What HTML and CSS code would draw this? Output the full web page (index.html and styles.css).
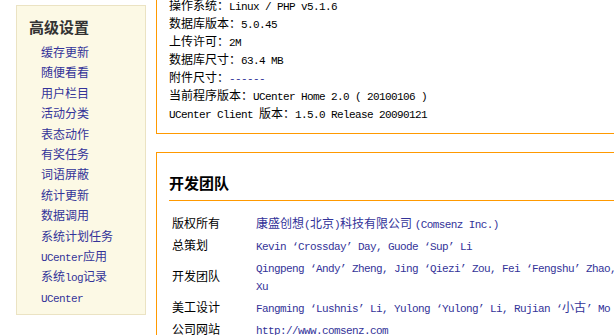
FILE: index.html
```html
<!DOCTYPE html>
<html lang="zh-CN">
<head>
    <meta charset="UTF-8">
    <title>UCenter Home 管理平台</title>
    <link rel="stylesheet" href="styles.css">
</head>
<body>
    <div class="page">
        <div class="side">
            <h2>高级设置</h2>
            <ul class="menu">
                <li><a href="#">缓存更新</a></li>
                <li><a href="#">随便看看</a></li>
                <li><a href="#">用户栏目</a></li>
                <li><a href="#">活动分类</a></li>
                <li><a href="#">表态动作</a></li>
                <li><a href="#">有奖任务</a></li>
                <li><a href="#">词语屏蔽</a></li>
                <li><a href="#">统计更新</a></li>
                <li><a href="#">数据调用</a></li>
                <li><a href="#">系统计划任务</a></li>
                <li><a href="#"><span class="en">UCenter</span>应用</a></li>
                <li><a href="#">系统<span class="en">log</span>记录</a></li>
                <li><a href="#"><span class="en">UCenter</span></a></li>
            </ul>
        </div>

        <div class="main">
            <div class="box info">
                <ul class="sysinfo">
                    <li>操作系统：<span class="en">Linux / PHP v5.1.6</span></li>
                    <li>数据库版本：<span class="en">5.0.45</span></li>
                    <li>上传许可：<span class="en">2M</span></li>
                    <li>数据库尺寸：<span class="en">63.4 MB</span></li>
                    <li>附件尺寸：<a href="#" class="en">------</a></li>
                    <li>当前程序版本：<span class="en">UCenter Home 2.0 ( 20100106 )</span></li>
                    <li><span class="en">UCenter Client </span>版本：<span class="en">1.5.0 Release 20090121</span></li>
                </ul>
            </div>

            <div class="box team">
                <h3>开发团队</h3>
                <table class="credits">
                    <tr>
                        <td class="label">版权所有</td>
                        <td class="value"><a href="#">康盛创想<span class="en">(</span>北京<span class="en">)</span>科技有限公司</a> <span class="en">(Comsenz Inc.)</span></td>
                    </tr>
                    <tr>
                        <td class="label">总策划</td>
                        <td class="value"><span class="en">Kevin ‘Crossday’ Day, Guode ‘Sup’ Li</span></td>
                    </tr>
                    <tr>
                        <td class="label">开发团队</td>
                        <td class="value"><span class="en">Qingpeng ‘Andy’ Zheng, Jing ‘Qiezi’ Zou, Fei ‘Fengshu’ Zhao, Xiaobo ‘Kerry’ Xu</span></td>
                    </tr>
                    <tr>
                        <td class="label">美工设计</td>
                        <td class="value"><span class="en">Fangming ‘Lushnis’ Li, Yulong ‘Yulong’ Li, Rujian ‘</span>小古<span class="en">’ Mo</span></td>
                    </tr>
                    <tr>
                        <td class="label">公司网站</td>
                        <td class="value"><a href="#" class="en">http://www.comsenz.com</a></td>
                    </tr>
                </table>
            </div>
        </div>
    </div>
</body>
</html>
```

FILE: styles.css
```css
html, body {
    overflow: hidden;
}

body {
    margin: 0;
    font-family: "Noto Sans CJK SC", sans-serif;
    font-size: 12px;
    color: #000;
    background-color: #fff;
}

a {
    color: #333399;
    text-decoration: none;
}

/* latin text, narrow monospace like the old song typeface */
.en {
    font-family: "Liberation Mono", monospace;
    font-size: 11px;
    line-height: 1;
    letter-spacing: -0.6px;
}

.page {
    display: flex;
    align-items: flex-start;
    gap: 10px;
    padding-left: 16px;
}

.side {
    flex: none;
    box-sizing: border-box;
    width: 130px;
    margin-top: 5px;
    padding: 11px 0 7px 12px;
    background-color: #fcf9e5;
    border: 1px solid #ebe3c3;
}

.side h2 {
    margin: 0 0 5px;
    font-size: 15px;
    line-height: 20px;
    color: #333;
}

.menu {
    list-style: none;
    margin: 0;
    padding: 0 0 0 12px;
}

.menu li {
    height: 20.4px;
    line-height: 20.4px;
    white-space: nowrap;
}

.main {
    flex: none;
    width: 660px;
}

.box {
    border: 1px solid #ff9900;
    padding: 0 12px;
}

.info {
    border-top: none;
    padding-bottom: 11px;
}

.sysinfo {
    list-style: none;
    margin: -4px 0 0;
    padding: 0;
}

.sysinfo li {
    height: 18px;
    line-height: 18px;
    white-space: nowrap;
}

.team {
    margin-top: 18px;
    padding-top: 20px;
    padding-bottom: 20px;
}

.team h3 {
    margin: 0;
    padding-bottom: 7px;
    font-size: 15px;
    line-height: 20px;
    border-bottom: 1px solid #ff9900;
}

.credits {
    margin-top: 11px;
    width: 550px;
    table-layout: fixed;
    border-collapse: separate;
    border-spacing: 0;
}

.credits td {
    padding: 2px 3px;
    line-height: 18px;
    vertical-align: middle;
}

.credits .label {
    width: 78px;
}

.credits .value {
    color: #333399;
}
```
